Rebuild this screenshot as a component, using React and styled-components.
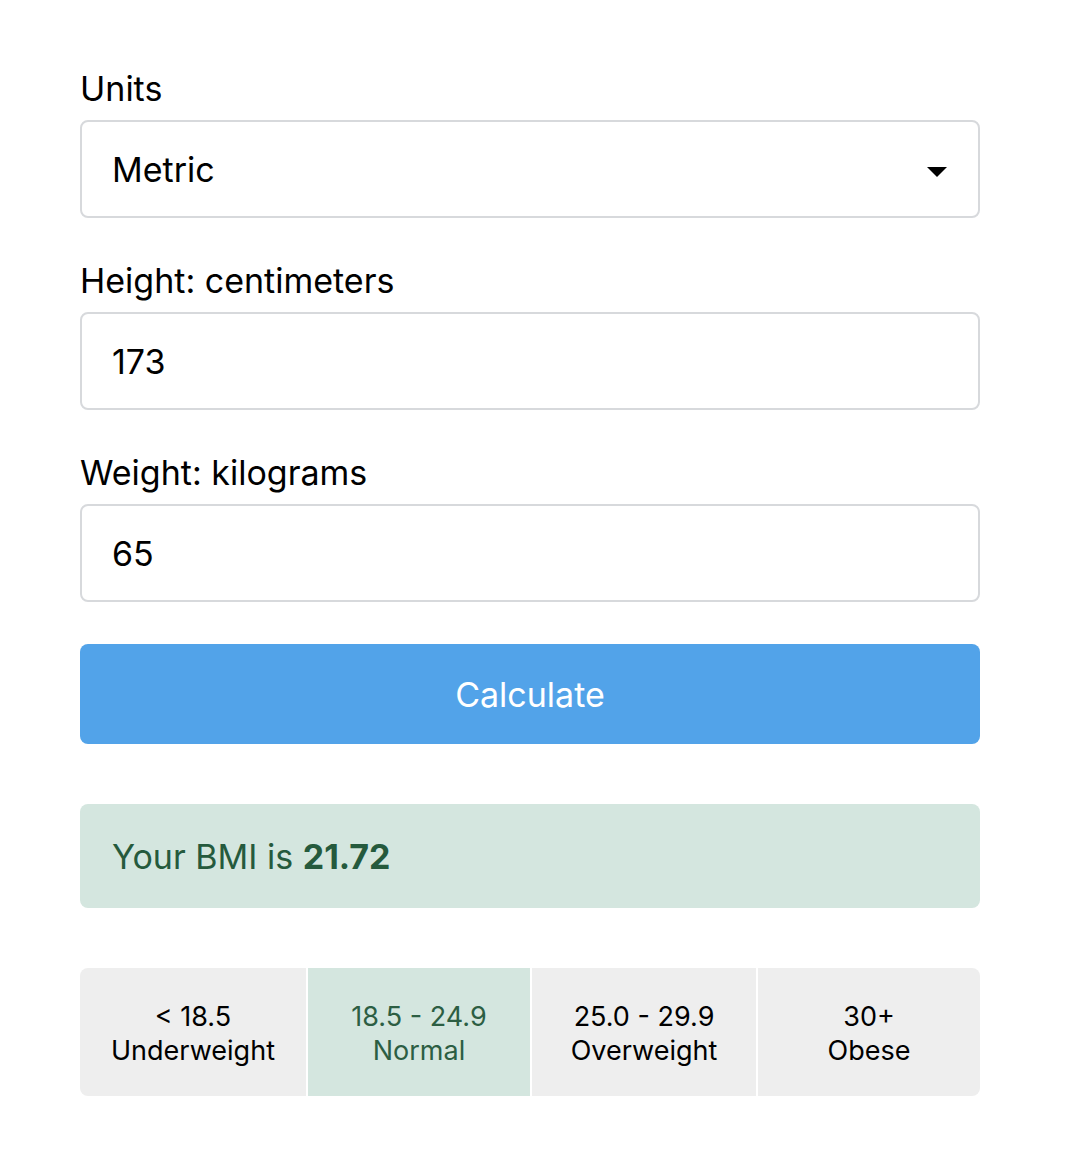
import React, { useState } from "react";
import styled, { createGlobalStyle } from "styled-components";

const Global = createGlobalStyle`
  html, body { margin: 0; padding: 0; background: #fff; }
  body { font-family: Inter, "Liberation Sans", sans-serif; color: #000; }
  * { box-sizing: border-box; }
`;

const Page = styled.div`
  width: 900px;
  margin: 0 0 0 80px;
  padding-top: 65px;
  display: flex;
  flex-direction: column;
`;

const Field = styled.div`
  display: flex;
  flex-direction: column;
  margin-bottom: 39px;
`;

const Label = styled.label`
  font-size: 34px;
  line-height: 48px;
  margin-bottom: 7px;
`;

const InputBox = styled.div`
  position: relative;
  height: 98px;
  border: 2px solid #d7d9dc;
  border-radius: 8px;
  display: flex;
  align-items: center;
  padding: 0 30px;
  font-size: 34px;
`;

const Input = styled.input`
  border: none;
  outline: none;
  font: inherit;
  width: 100%;
  padding: 0;
  background: transparent;
`;

const Caret = styled.span`
  position: absolute;
  right: 31px;
  top: 45px;
  width: 0;
  height: 0;
  border-left: 10px solid transparent;
  border-right: 10px solid transparent;
  border-top: 10px solid #000;
`;

const Button = styled.button`
  height: 100px;
  margin-top: 3px;
  border: none;
  border-radius: 8px;
  background: #52a3e9;
  color: #fff;
  font: inherit;
  font-size: 34px;
  cursor: pointer;
`;

const Result = styled.div`
  margin-top: 60px;
  height: 104px;
  border-radius: 8px;
  background: #d4e6df;
  color: #255a3d;
  font-size: 34px;
  display: flex;
  align-items: center;
  padding: 0 32px;
  b { font-weight: 700; }
`;

const Categories = styled.div`
  margin-top: 60px;
  height: 128px;
  display: grid;
  grid-template-columns: 226px 222px 224px 222px;
  gap: 2px;
  border-radius: 8px;
  overflow: hidden;
`;

const Cat = styled.div`
  background: ${(p) => (p.$active ? "#d4e6df" : "#eeeeee")};
  color: ${(p) => (p.$active ? "#2c5e43" : "#000")};
  display: flex;
  flex-direction: column;
  align-items: center;
  justify-content: center;
  padding-top: 4px;
  font-size: 27px;
  line-height: 34px;
  text-align: center;
`;

const cats = [
  ["< 18.5", "Underweight"],
  ["18.5 - 24.9", "Normal", true],
  ["25.0 - 29.9", "Overweight"],
  ["30+", "Obese"],
];

export default function App() {
  const [h, setH] = useState("173");
  const [w, setW] = useState("65");
  return (
    <>
      <Global />
      <Page>
        <Field>
          <Label>Units</Label>
          <InputBox>
            Metric
            <Caret />
          </InputBox>
        </Field>
        <Field>
          <Label>Height: centimeters</Label>
          <InputBox>
            <Input value={h} onChange={(e) => setH(e.target.value)} />
          </InputBox>
        </Field>
        <Field>
          <Label>Weight: kilograms</Label>
          <InputBox>
            <Input value={w} onChange={(e) => setW(e.target.value)} />
          </InputBox>
        </Field>
        <Button>Calculate</Button>
        <Result>
          <span>
            Your BMI is <b>21.72</b>
          </span>
        </Result>
        <Categories>
          {cats.map(([r, n, a]) => (
            <Cat key={n} $active={a}>
              <span>{r}</span>
              <span>{n}</span>
            </Cat>
          ))}
        </Categories>
      </Page>
    </>
  );
}
